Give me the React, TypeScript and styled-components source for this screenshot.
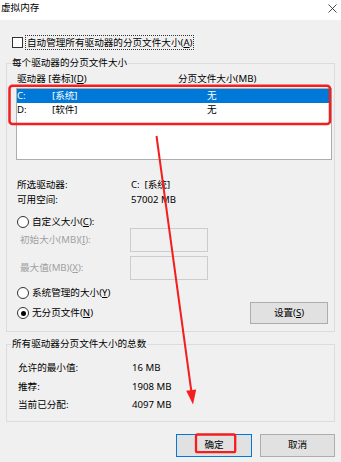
import React from 'react';
import styled, { createGlobalStyle } from 'styled-components';

const GlobalStyle = createGlobalStyle`
  html, body { margin: 0; padding: 0; background: #f0f0f0; }
  body {
    font-family: "Noto Sans", "Noto Sans CJK SC", sans-serif;
    font-size: 9.6px;
    line-height: 12px;
    color: #000;
  }
  * { box-sizing: border-box; }
`;

const Window = styled.div`
  position: relative;
  width: 341px;
  height: 462px;
  background: #f0f0f0;
  overflow: hidden;
`;

const TitleBar = styled.div`
  height: 20px;
  background: #fff;
  display: flex;
  justify-content: space-between;
  align-items: flex-start;
  padding: 2px 4px 0 1px;
`;

const Title = styled.span`
  line-height: 12px;
`;

const CloseIcon = styled.svg`
  margin-top: 2px;
  width: 9px;
  height: 9px;
`;

const Body = styled.div`
  padding: 0 6px;
  display: flex;
  flex-direction: column;
`;

const CheckRow = styled.div`
  margin-top: 15px;
  height: 15px;
  display: flex;
  align-items: center;
  gap: 2px;
  padding-left: 6px;
`;

const CheckBox = styled.span`
  width: 11px;
  height: 11px;
  border: 1px solid #333;
  background: #fff;
`;

const FocusLabel = styled.span`
  height: 15px;
  line-height: 13px;
  padding: 0 1px;
  border: 1px dotted #333;
`;

const Group = styled.fieldset<{ $gap: number }>`
  margin: ${(p) => p.$gap}px 0 0;
  padding: 0;
  border: 1px solid #dcdcdc;
  min-width: 0;
`;

const Legend = styled.legend`
  margin-left: 4px;
  padding: 0 1px;
  line-height: 12px;
  font-size: 9.6px;
`;

const GroupBody = styled.div<{ $pad: string }>`
  padding: ${(p) => p.$pad};
  display: flex;
  flex-direction: column;
`;

const HeaderRow = styled.div`
  display: grid;
  grid-template-columns: 161px 1fr;
  padding-left: 1px;
  height: 12px;
  line-height: 12px;
`;

const ListBox = styled.div`
  margin-top: 3px;
  height: 72px;
  border: 1px solid #adadad;
  background: #fff;
`;

const ListRow = styled.div<{ $selected?: boolean }>`
  display: grid;
  grid-template-columns: 35px 155px 1fr;
  height: 14px;
  line-height: 14px;
  background: ${(p) => (p.$selected ? '#0078d7' : 'transparent')};
  color: ${(p) => (p.$selected ? '#fff' : '#000')};
`;

const InfoBlock = styled.div<{ $top: number; $row: number; $indent: number }>`
  margin-top: ${(p) => p.$top}px;
  display: grid;
  grid-template-columns: 114px 1fr;
  grid-auto-rows: ${(p) => p.$row}px;
  align-items: center;
  padding-left: ${(p) => p.$indent}px;
`;

const RadioRow = styled.div<{ $top: number }>`
  margin-top: ${(p) => p.$top}px;
  height: 12px;
  display: flex;
  align-items: center;
  gap: 3px;
  padding-left: 1px;
`;

const Radio = styled.span<{ $checked?: boolean }>`
  width: 12px;
  height: 12px;
  border-radius: 50%;
  border: 1px solid #333;
  background: #fff;
  display: flex;
  align-items: center;
  justify-content: center;
  &::after {
    content: '';
    width: 5px;
    height: 5px;
    border-radius: 50%;
    background: ${(p) => (p.$checked ? '#000' : 'transparent')};
  }
`;

const InputRow = styled.div<{ $top: number }>`
  margin-top: ${(p) => p.$top}px;
  height: 24px;
  display: grid;
  grid-template-columns: 110px 78px;
  align-items: center;
  padding-left: 4px;
  color: #a0a0a0;
`;

const DisabledInput = styled.div`
  height: 24px;
  border: 1px solid #cccccc;
  background: #f0f0f0;
`;

const SplitRow = styled.div`
  margin-top: 3px;
  height: 22px;
  display: flex;
  align-items: center;
  justify-content: space-between;
`;

const Button = styled.button<{ $w: number; $h: number; $default?: boolean }>`
  width: ${(p) => p.$w}px;
  height: ${(p) => p.$h}px;
  padding: 0;
  margin: 0;
  font-family: inherit;
  font-size: 9.6px;
  line-height: 12px;
  color: #000;
  background: #e1e1e1;
  border: 1px solid ${(p) => (p.$default ? '#0078d7' : '#adadad')};
  border-radius: 0;
`;

const SetButton = styled(Button)`
  margin-right: 4px;
`;

const ButtonRow = styled.div`
  margin-top: 12px;
  display: flex;
  justify-content: flex-end;
  gap: 8px;
`;

const Overlay = styled.svg`
  position: absolute;
  left: 0;
  top: 0;
  width: 341px;
  height: 462px;
  pointer-events: none;
`;

export default function App() {
  return (
    <>
      <GlobalStyle />
      <Window>
        <TitleBar>
          <Title>虚拟内存</Title>
          <CloseIcon viewBox="0 0 9 9">
            <path d="M0.5 0.5 L8.5 8.5 M8.5 0.5 L0.5 8.5" stroke="#333" strokeWidth="0.9" fill="none" />
          </CloseIcon>
        </TitleBar>
        <Body>
          <CheckRow>
            <CheckBox />
            <FocusLabel>
              自动管理所有驱动器的分页文件大小(<u>A</u>)
            </FocusLabel>
          </CheckRow>

          <Group $gap={7}>
            <Legend>每个驱动器的分页文件大小</Legend>
            <GroupBody $pad="4px 2px 7px 9px">
              <HeaderRow>
                <span>
                  驱动器 [卷标](<u>D</u>)
                </span>
                <span>分页文件大小(MB)</span>
              </HeaderRow>
              <ListBox>
                <ListRow $selected>
                  <span>C:</span>
                  <span>[系统]</span>
                  <span>无</span>
                </ListRow>
                <ListRow>
                  <span>D:</span>
                  <span>[软件]</span>
                  <span>无</span>
                </ListRow>
              </ListBox>

              <InfoBlock $top={17} $row={15} $indent={1}>
                <span>所选驱动器:</span>
                <span>C:&nbsp;&nbsp;[系统]</span>
                <span>可用空间:</span>
                <span>57002 MB</span>
              </InfoBlock>

              <RadioRow $top={9}>
                <Radio />
                <span>
                  自定义大小(<u>C</u>):
                </span>
              </RadioRow>
              <InputRow $top={0}>
                <span>
                  初始大小(MB)(<u>I</u>):
                </span>
                <DisabledInput />
              </InputRow>
              <InputRow $top={4}>
                <span>
                  最大值(MB)(<u>X</u>):
                </span>
                <DisabledInput />
              </InputRow>

              <RadioRow $top={7}>
                <Radio />
                <span>
                  系统管理的大小(<u>Y</u>)
                </span>
              </RadioRow>
              <SplitRow>
                <RadioRow $top={0}>
                  <Radio $checked />
                  <span>
                    无分页文件(<u>N</u>)
                  </span>
                </RadioRow>
                <SetButton $w={78} $h={22}>
                  设置(<u>S</u>)
                </SetButton>
              </SplitRow>
            </GroupBody>
          </Group>

          <Group $gap={6}>
            <Legend>所有驱动器分页文件大小的总数</Legend>
            <GroupBody $pad="9px 2px 6px 0">
              <InfoBlock $top={0} $row={18.5} $indent={11}>
                <span>允许的最小值:</span>
                <span>16 MB</span>
                <span>推荐:</span>
                <span>1908 MB</span>
                <span>当前已分配:</span>
                <span>4097 MB</span>
              </InfoBlock>
            </GroupBody>
          </Group>

          <ButtonRow>
            <Button $w={76} $h={23} $default>
              确定
            </Button>
            <Button $w={75} $h={23}>
              取消
            </Button>
          </ButtonRow>
        </Body>

        <Overlay viewBox="0 0 341 462">
          <rect x="9.5" y="85.8" width="320.5" height="38.2" rx="3" fill="none" stroke="#f41e1e" strokeWidth="2.5" />
          <rect x="196" y="434.5" width="39.2" height="17.7" rx="1.5" fill="none" stroke="#f41e1e" strokeWidth="2.3" />
          <line x1="156.5" y1="136" x2="191.3" y2="391" stroke="#f41e1e" strokeWidth="2" />
          <polygon points="193,404.5 196.2,389.4 186.2,390.8" fill="#f41e1e" />
        </Overlay>
      </Window>
    </>
  );
}
